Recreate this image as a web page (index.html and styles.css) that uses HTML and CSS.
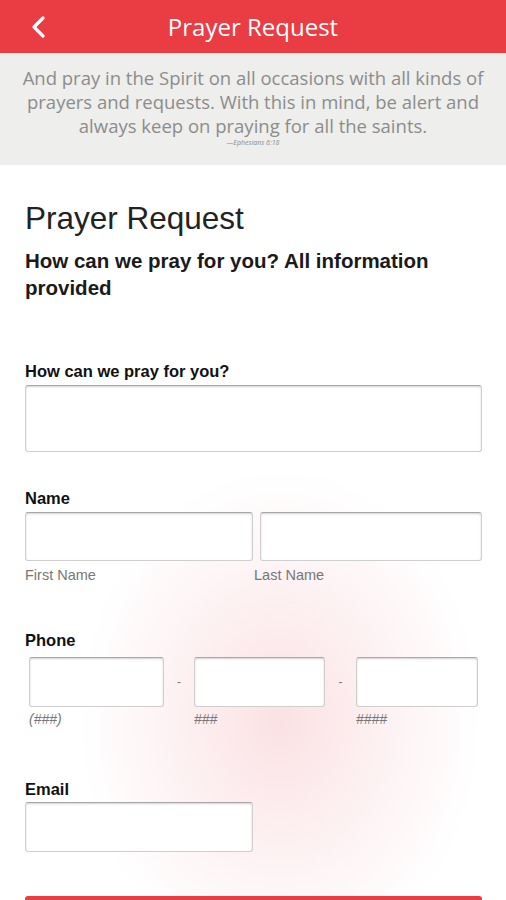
FILE: index.html
```html
<!DOCTYPE html>
<html lang="en">
<head>
    <meta charset="UTF-8">
    <title>Prayer Request</title>
    <link rel="stylesheet" href="styles.css">
</head>
<body>
<div class="topBar">
    <button class="backButton" aria-label="Back">
        <svg width="16" height="24" viewBox="0 0 16 24"><path d="M13 3 L4 12 L13 21" fill="none" stroke="#fff" stroke-width="3.2" stroke-linecap="round" stroke-linejoin="round"/></svg>
    </button>
    <h1 class="topTitle">Prayer Request</h1>
    <span></span>
</div>

<div class="verse">
    <p class="verseText">And pray in the Spirit on all occasions with all kinds of prayers and requests. With this in mind, be alert and always keep on praying for all the saints.</p>
    <p class="verseRef">&mdash;Ephesians 6:18</p>
</div>

<form class="prayerForm">
    <h2 class="formTitle">Prayer Request</h2>
    <p class="formIntro">How can we pray for you? All information provided</p>

    <label class="fieldLabel first">How can we pray for you?</label>
    <textarea class="field requestBox"></textarea>

    <label class="fieldLabel">Name</label>
    <div class="nameRow">
        <div>
            <input class="field" type="text">
            <span class="subLabel">First Name</span>
        </div>
        <div>
            <input class="field" type="text">
            <span class="subLabel lastName">Last Name</span>
        </div>
    </div>

    <label class="fieldLabel phoneLabel">Phone</label>
    <div class="phoneRow">
        <div>
            <input class="field" type="text">
            <span class="subLabel hint">(###)</span>
        </div>
        <span class="dash">-</span>
        <div>
            <input class="field" type="text">
            <span class="subLabel hint">###</span>
        </div>
        <span class="dash">-</span>
        <div>
            <input class="field" type="text">
            <span class="subLabel hint">####</span>
        </div>
    </div>

    <label class="fieldLabel emailLabel">Email</label>
    <input class="field emailBox" type="text">

    <button class="submitButton" type="button" aria-label="Submit"></button>
</form>
</body>
</html>
```

FILE: styles.css
```css
body {
    margin: 0;
    padding: 0;
    width: 506px;
    height: 900px;
    overflow: hidden;
    font-family: 'Liberation Sans', Arial, sans-serif;
    background-color: #fff;
    background-image: radial-gradient(ellipse 200px 250px at 280px 720px, rgba(238, 130, 140, 0.24), rgba(238, 130, 140, 0.1) 55%, rgba(255, 255, 255, 0) 100%);
    background-repeat: no-repeat;
}

.topBar {
    display: grid;
    grid-template-columns: 60px 1fr 60px;
    align-items: center;
    height: 53px;
    background-color: #ea3c43;
}

.backButton {
    background: none;
    border: none;
    padding: 0 0 0 30px;
    height: 53px;
    display: flex;
    align-items: center;
    cursor: pointer;
}

.topTitle {
    margin: 0;
    text-align: center;
    font-family: 'Open Sans', sans-serif;
    font-weight: normal;
    font-size: 24px;
    color: #fff;
}

.verse {
    background-color: #eeeeec;
    padding: 13px 14px 17px;
    text-align: center;
    color: #8c8c8c;
    font-family: 'Open Sans', sans-serif;
}

.verseText {
    margin: 0;
    font-size: 18.5px;
    line-height: 24px;
}

.verseRef {
    margin: 0;
    font-size: 7px;
    line-height: 10px;
    font-style: italic;
}

.prayerForm {
    padding: 36px 25px 0;
    display: flex;
    flex-direction: column;
    align-items: flex-start;
}

.formTitle {
    margin: 0;
    font-weight: normal;
    font-size: 31.5px;
    line-height: 34px;
    color: #222;
}

.formIntro {
    margin: 12px 0 0;
    font-weight: bold;
    font-size: 20.5px;
    line-height: 27px;
    color: #1a1a1a;
}

.fieldLabel {
    display: block;
    margin-top: 37px;
    font-weight: bold;
    font-size: 16.5px;
    line-height: 18px;
    color: #111;
}

.fieldLabel.first {
    margin-top: 61px;
}

.phoneLabel {
    margin-top: 48px;
}

.emailLabel {
    margin-top: 53px;
}

.field {
    display: block;
    box-sizing: border-box;
    width: 100%;
    height: 49px;
    margin: 5px 0 0;
    border: 1px solid #cfcfcf;
    border-top-color: #a8a8a8;
    border-radius: 3px;
    background: #fff;
    box-shadow: inset 0 1px 2px rgba(0, 0, 0, 0.18);
    font-family: inherit;
    font-size: 15px;
}

.requestBox {
    width: 457px;
    height: 67px;
    resize: none;
}

.nameRow {
    display: grid;
    grid-template-columns: 228px 222px;
    column-gap: 7px;
    width: 457px;
}

.subLabel {
    display: block;
    margin-top: 6px;
    font-size: 14.5px;
    line-height: 16px;
    color: #777;
}

.lastName {
    margin-left: -6px;
}

.phoneRow {
    display: grid;
    grid-template-columns: 135px 30px 131px 31px 122px;
    align-items: start;
    margin-left: 4px;
    margin-top: 3px;
}

.phoneRow .field {
    height: 50px;
}

.hint {
    font-style: italic;
    font-size: 14px;
    margin-top: 4px;
}

.dash {
    text-align: center;
    margin-top: 5px;
    line-height: 50px;
    font-size: 12px;
    color: #777;
}

.emailBox {
    width: 228px;
    height: 50px;
    margin-top: 4px;
}

.submitButton {
    margin-top: 44px;
    width: 457px;
    height: 50px;
    border: none;
    border-radius: 3px;
    background-color: #ea3c43;
}
```
